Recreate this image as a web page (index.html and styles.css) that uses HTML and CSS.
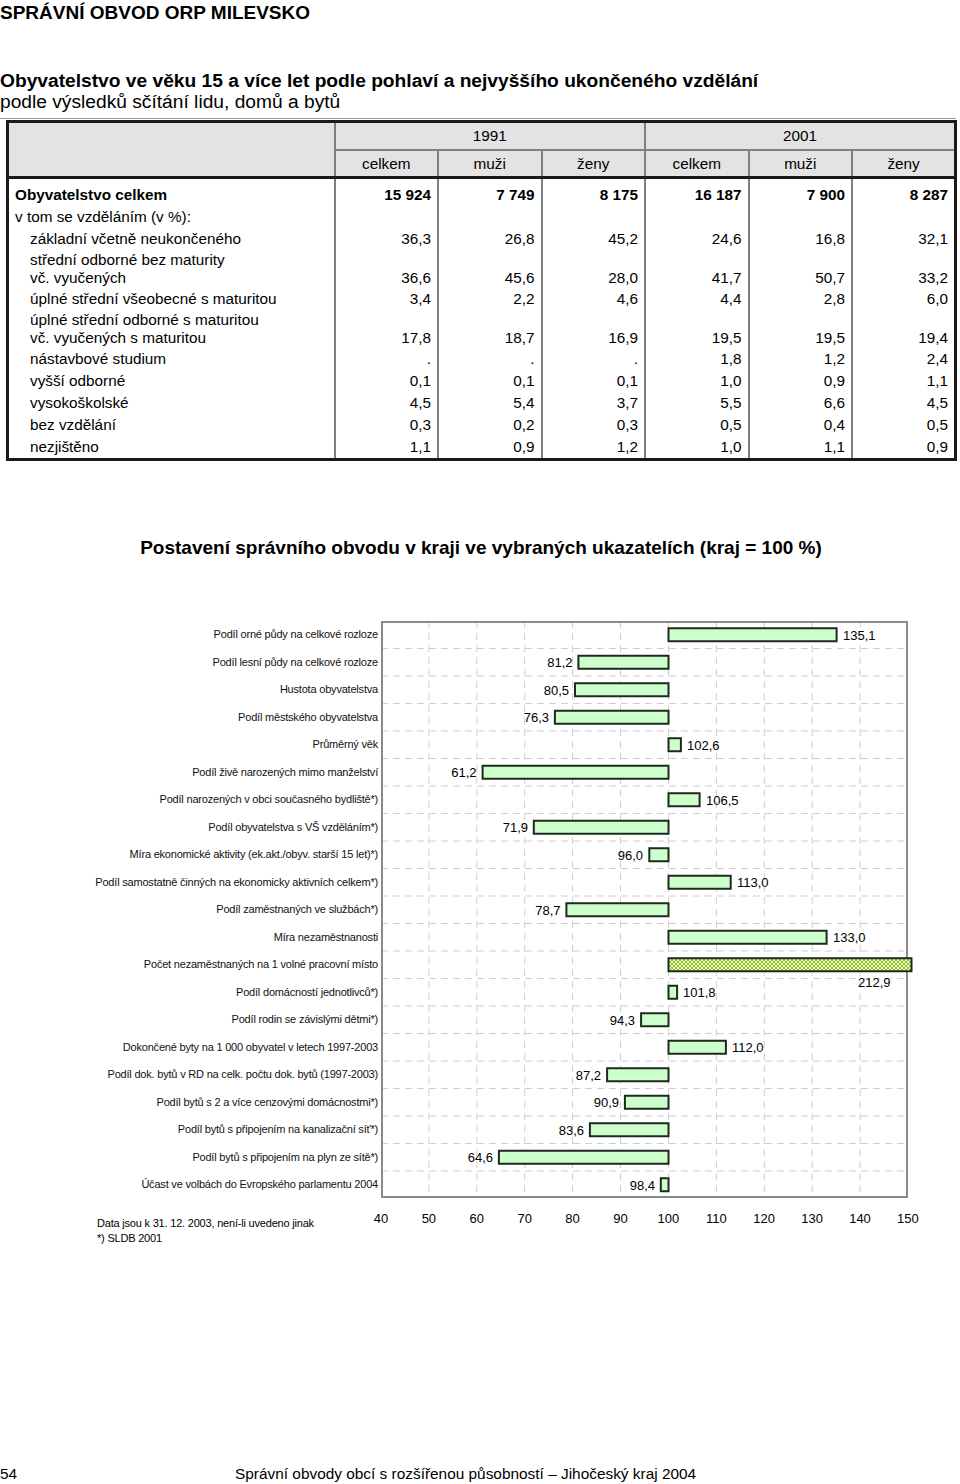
FILE: index.html
```html
<!DOCTYPE html>
<html lang="cs">
<head>
<meta charset="utf-8">
<title>Správní obvod ORP Milevsko</title>
<link rel="stylesheet" href="styles.css">
</head>
<body>
<div class="page">
  <h1 class="title">SPRÁVNÍ OBVOD ORP MILEVSKO</h1>
  <div class="subtitle">
    <div class="sub-bold">Obyvatelstvo ve věku 15 a více let podle pohlaví a nejvyššího ukončeného vzdělání</div>
    <div class="sub-reg">podle výsledků sčítání lidu, domů a bytů</div>
  </div>

  <table class="edu">
    <colgroup>
      <col class="c-label"><col class="c-num"><col class="c-num"><col class="c-num"><col class="c-num"><col class="c-num"><col class="c-num">
    </colgroup>
    <thead>
      <tr class="h1r"><th rowspan="2" class="corner"></th><th colspan="3">1991</th><th colspan="3">2001</th></tr>
      <tr class="h2r"><th>celkem</th><th>muži</th><th>ženy</th><th>celkem</th><th>muži</th><th>ženy</th></tr>
    </thead>
    <tbody>
      <tr class="first total"><td class="lbl">Obyvatelstvo celkem</td><td>15 924</td><td>7 749</td><td>8 175</td><td>16 187</td><td>7 900</td><td>8 287</td></tr>
      <tr><td class="lbl">v tom se vzděláním (v %):</td><td></td><td></td><td></td><td></td><td></td><td></td></tr>
      <tr><td class="lbl ind">základní včetně neukončeného</td><td>36,3</td><td>26,8</td><td>45,2</td><td>24,6</td><td>16,8</td><td>32,1</td></tr>
      <tr class="two"><td class="lbl ind">střední odborné bez maturity<br>vč. vyučených</td><td>36,6</td><td>45,6</td><td>28,0</td><td>41,7</td><td>50,7</td><td>33,2</td></tr>
      <tr><td class="lbl ind">úplné střední všeobecné s maturitou</td><td>3,4</td><td>2,2</td><td>4,6</td><td>4,4</td><td>2,8</td><td>6,0</td></tr>
      <tr class="two"><td class="lbl ind">úplné střední odborné s maturitou<br>vč. vyučených s maturitou</td><td>17,8</td><td>18,7</td><td>16,9</td><td>19,5</td><td>19,5</td><td>19,4</td></tr>
      <tr><td class="lbl ind">nástavbové studium</td><td>.</td><td>.</td><td>.</td><td>1,8</td><td>1,2</td><td>2,4</td></tr>
      <tr><td class="lbl ind">vyšší odborné</td><td>0,1</td><td>0,1</td><td>0,1</td><td>1,0</td><td>0,9</td><td>1,1</td></tr>
      <tr><td class="lbl ind">vysokoškolské</td><td>4,5</td><td>5,4</td><td>3,7</td><td>5,5</td><td>6,6</td><td>4,5</td></tr>
      <tr><td class="lbl ind">bez vzdělání</td><td>0,3</td><td>0,2</td><td>0,3</td><td>0,5</td><td>0,4</td><td>0,5</td></tr>
      <tr class="last"><td class="lbl ind">nezjištěno</td><td>1,1</td><td>0,9</td><td>1,2</td><td>1,0</td><td>1,1</td><td>0,9</td></tr>
    </tbody>
  </table>

  <section class="chart">
    <h2 class="chart-title">Postavení správního obvodu v kraji ve vybraných ukazatelích (kraj = 100 %)</h2>
    <div class="chart-body">
      <ul class="cats">
        <li>Podíl orné půdy na celkové rozloze</li>
        <li>Podíl lesní půdy na celkové rozloze</li>
        <li>Hustota obyvatelstva</li>
        <li>Podíl městského obyvatelstva</li>
        <li>Průměrný věk</li>
        <li>Podíl živě narozených mimo manželství</li>
        <li>Podíl narozených v obci současného bydliště*)</li>
        <li>Podíl obyvatelstva s VŠ vzděláním*)</li>
        <li>Míra ekonomické aktivity (ek.akt./obyv. starší 15 let)*)</li>
        <li>Podíl samostatně činných na ekonomicky aktivních celkem*)</li>
        <li>Podíl zaměstnaných ve službách*)</li>
        <li>Míra nezaměstnanosti</li>
        <li>Počet nezaměstnaných na 1 volné pracovní místo</li>
        <li>Podíl domácností jednotlivců*)</li>
        <li>Podíl rodin se závislými dětmi*)</li>
        <li>Dokončené byty na 1 000 obyvatel v letech 1997-2003</li>
        <li>Podíl dok. bytů v RD na celk. počtu dok. bytů (1997-2003)</li>
        <li>Podíl bytů s 2 a více cenzovými domácnostmi*)</li>
        <li>Podíl bytů s připojením na kanalizační síť*)</li>
        <li>Podíl bytů s připojením na plyn ze sítě*)</li>
        <li>Účast ve volbách do Evropského parlamentu 2004</li>
      </ul>
      <div class="plot">
        <svg class="plot-svg" width="531" height="577" viewBox="0 0 531 577">
          <defs>
            <pattern id="checks" width="4" height="4" patternUnits="userSpaceOnUse">
              <rect width="4" height="4" fill="#f2f9d6"/>
              <rect width="2" height="2" fill="#8cc21a"/>
              <rect x="2" y="2" width="2" height="2" fill="#8cc21a"/>
            </pattern>
          </defs>
          <g class="grid">
            <line x1="47.9" y1="0" x2="47.9" y2="577"/>
            <line x1="95.8" y1="0" x2="95.8" y2="577"/>
            <line x1="143.7" y1="0" x2="143.7" y2="577"/>
            <line x1="191.6" y1="0" x2="191.6" y2="577"/>
            <line x1="239.5" y1="0" x2="239.5" y2="577"/>
            <line x1="287.5" y1="0" x2="287.5" y2="577"/>
            <line x1="335.4" y1="0" x2="335.4" y2="577"/>
            <line x1="383.3" y1="0" x2="383.3" y2="577"/>
            <line x1="431.2" y1="0" x2="431.2" y2="577"/>
            <line x1="479.1" y1="0" x2="479.1" y2="577"/>
            <line x1="0" y1="27.5" x2="527" y2="27.5"/>
            <line x1="0" y1="55" x2="527" y2="55"/>
            <line x1="0" y1="82.5" x2="527" y2="82.5"/>
            <line x1="0" y1="110" x2="527" y2="110"/>
            <line x1="0" y1="137.5" x2="527" y2="137.5"/>
            <line x1="0" y1="165" x2="527" y2="165"/>
            <line x1="0" y1="192.5" x2="527" y2="192.5"/>
            <line x1="0" y1="220" x2="527" y2="220"/>
            <line x1="0" y1="247.5" x2="527" y2="247.5"/>
            <line x1="0" y1="275" x2="527" y2="275"/>
            <line x1="0" y1="302.5" x2="527" y2="302.5"/>
            <line x1="0" y1="330" x2="527" y2="330"/>
            <line x1="0" y1="357.5" x2="527" y2="357.5"/>
            <line x1="0" y1="385" x2="527" y2="385"/>
            <line x1="0" y1="412.5" x2="527" y2="412.5"/>
            <line x1="0" y1="440" x2="527" y2="440"/>
            <line x1="0" y1="467.5" x2="527" y2="467.5"/>
            <line x1="0" y1="495" x2="527" y2="495"/>
            <line x1="0" y1="522.5" x2="527" y2="522.5"/>
            <line x1="0" y1="550" x2="527" y2="550"/>
          </g>
          <rect class="frame" x="1" y="1" width="525" height="575"/>
          <g class="bars">
            <rect x="287.5" y="7.25" width="168.1" height="13"/>
            <rect x="197.4" y="34.75" width="90.1" height="13"/>
            <rect x="194.0" y="62.25" width="93.5" height="13"/>
            <rect x="173.9" y="89.75" width="113.6" height="13"/>
            <rect x="287.5" y="117.25" width="12.4" height="13"/>
            <rect x="101.6" y="144.75" width="185.9" height="13"/>
            <rect x="287.5" y="172.25" width="31.1" height="13"/>
            <rect x="152.8" y="199.75" width="134.7" height="13"/>
            <rect x="268.3" y="227.25" width="19.2" height="13"/>
            <rect x="287.5" y="254.75" width="62.2" height="13"/>
            <rect x="185.4" y="282.25" width="102.1" height="13"/>
            <rect x="287.5" y="309.75" width="158.1" height="13"/>
            <rect class="special" x="287.5" y="337.25" width="243" height="13"/>
            <rect x="287.5" y="364.75" width="8.6" height="13"/>
            <rect x="260.1" y="392.25" width="27.4" height="13"/>
            <rect x="287.5" y="419.75" width="57.4" height="13"/>
            <rect x="226.1" y="447.25" width="61.4" height="13"/>
            <rect x="243.9" y="474.75" width="43.6" height="13"/>
            <rect x="208.9" y="502.25" width="78.6" height="13"/>
            <rect x="117.9" y="529.75" width="169.6" height="13"/>
            <rect x="279.8" y="557.25" width="7.7" height="13"/>
          </g>
          <g class="vals">
            <text x="462" y="18.5">135,1</text>
            <text class="neg" x="191.5" y="46">81,2</text>
            <text class="neg" x="188" y="73.5">80,5</text>
            <text class="neg" x="168" y="101">76,3</text>
            <text x="306" y="128.5">102,6</text>
            <text class="neg" x="95.6" y="156">61,2</text>
            <text x="325" y="183.5">106,5</text>
            <text class="neg" x="147" y="211">71,9</text>
            <text class="neg" x="262" y="238.5">96,0</text>
            <text x="356" y="266">113,0</text>
            <text class="neg" x="179.5" y="293.5">78,7</text>
            <text x="452" y="321">133,0</text>
            <text x="477" y="366">212,9</text>
            <text x="302" y="376">101,8</text>
            <text class="neg" x="254" y="403.5">94,3</text>
            <text x="351" y="431">112,0</text>
            <text class="neg" x="220" y="458.5">87,2</text>
            <text class="neg" x="238" y="486">90,9</text>
            <text class="neg" x="203" y="513.5">83,6</text>
            <text class="neg" x="112" y="541">64,6</text>
            <text class="neg" x="274" y="568.5">98,4</text>
          </g>
        </svg>
      </div>
    </div>
    <div class="chart-foot">
      <div class="notes">
        <div>Data jsou k 31. 12. 2003, není-li uvedeno jinak</div>
        <div>*) SLDB 2001</div>
      </div>
      <ol class="axis">
        <li>40</li><li>50</li><li>60</li><li>70</li><li>80</li><li>90</li><li>100</li><li>110</li><li>120</li><li>130</li><li>140</li><li>150</li>
      </ol>
    </div>
  </section>

  <footer class="foot">
    <span class="pg">54</span>
    <span class="pub">Správní obvody obcí s rozšířenou působností – Jihočeský kraj 2004</span>
  </footer>
</div>
</body>
</html>
```

FILE: styles.css
```css
* { box-sizing: border-box; }
html, body { margin: 0; padding: 0; background: #fff; }
body {
  font-family: "Liberation Sans", Arial, sans-serif;
  color: #000;
}
.page {
  width: 960px;
  height: 1484px;
  display: flex;
  flex-direction: column;
}
.title {
  margin: 0;
  font-size: 19px;
  line-height: 26px;
  font-weight: bold;
}
.subtitle {
  margin-top: 44px;
  font-size: 19.2px;
  line-height: 21px;
  padding-bottom: 6px;
  border-bottom: 1px solid #9a9a9a;
  margin-right: 4px;
}
.sub-bold { font-weight: bold; }

.edu {
  margin: 1px 0 0 6px;
  width: 948px;
  border-collapse: collapse;
  border: 3px solid #1a1a1a;
  font-size: 15.3px;
  table-layout: fixed;
}
.c-label { width: 327px; }
.c-num { width: 103.5px; }
.edu thead th {
  background: #e3e3e3;
  font-weight: normal;
  text-align: center;
  border-left: 2px solid #808080;
  border-bottom: 2px solid #808080;
  padding: 0;
}
.edu .h1r th { height: 28px; line-height: 26px; }
.edu .h2r th { height: 26px; line-height: 25px; border-bottom: 3px solid #1a1a1a; }
.edu thead th.corner { border-left: none; border-bottom: 3px solid #1a1a1a; }
.edu td {
  padding: 0 6px 0 0;
  line-height: 22px;
  text-align: right;
  border-left: 2px solid #808080;
  vertical-align: bottom;
}
.edu td.lbl {
  text-align: left;
  border-left: none;
  padding-left: 6px;
}
.edu td.ind { padding-left: 21px; }
.edu tr.first td { padding-top: 5px; }
.edu tr.total td { font-weight: bold; }
.edu tr.two td { line-height: 18px; padding-bottom: 0; }
.edu tr.two td.lbl { padding-top: 1px; padding-bottom: 1px; }
.edu tr.two td:not(.lbl) { padding-bottom: 1px; }

.chart { margin-top: 76px; }
.chart-title {
  margin: 0;
  text-align: center;
  font-size: 19px;
  line-height: 22px;
  font-weight: bold;
  padding-left: 2px;
}
.chart-body {
  margin-top: 62px;
  display: grid;
  grid-template-columns: 381px 531px;
}
.cats {
  list-style: none;
  margin: 0;
  padding: 0 3px 0 0;
  font-size: 11px;
  letter-spacing: -0.2px;
  text-align: right;
  color: #111;
}
.cats li {
  height: 27.5px;
  line-height: 27.5px;
  white-space: nowrap;
}
.plot { width: 531px; height: 577px; }
.plot-svg { display: block; overflow: visible; }
.grid line {
  stroke: #cfcfcf;
  stroke-width: 1;
  stroke-dasharray: 7 5;
}
.frame { fill: none; stroke: #8a8a8a; stroke-width: 2; }
.bars rect {
  fill: #ccffcc;
  stroke: #1e2a1e;
  stroke-width: 2;
}
.bars rect.special { fill: url(#checks); }
.vals text {
  font-family: "Liberation Sans", Arial, sans-serif;
  font-size: 13px;
  fill: #000;
}
.vals text.neg { text-anchor: end; }

.chart-foot {
  display: flex;
  margin-top: 11px;
}
.notes {
  width: 357px;
  padding: 6px 0 0 97px;
  font-size: 11px;
  line-height: 15px;
  letter-spacing: -0.2px;
}
.axis {
  list-style: none;
  margin: 0;
  padding: 0;
  display: flex;
  font-size: 13px;
  line-height: 18px;
}
.axis li { width: 47.91px; text-align: center; }

.foot {
  margin-top: auto;
  margin-bottom: 0;
  height: 20px;
  display: flex;
  font-size: 15.4px;
  line-height: 20px;
}
.foot .pg { width: 235px; }
```
